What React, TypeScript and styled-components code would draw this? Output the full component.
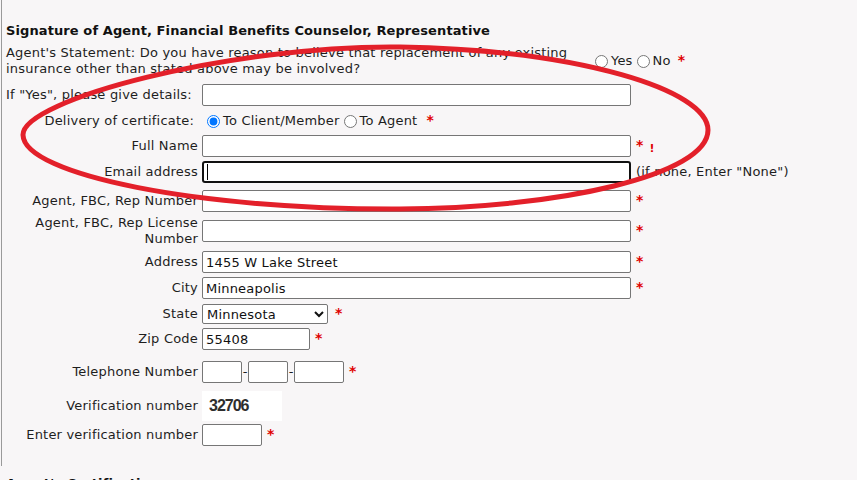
import React from "react";
import styled, { createGlobalStyle } from "styled-components";

const GlobalStyle = createGlobalStyle`
  html, body { margin: 0; padding: 0; background: #f8f6f7; }
  body {
    font-family: "DejaVu Sans", Verdana, sans-serif;
    font-size: 13px;
    letter-spacing: 0.2px;
    color: #1e1e1e;
  }
`;

const Page = styled.div`
  position: relative;
  width: 857px;
  height: 480px;
  overflow: hidden;
`;

const Section = styled.div`
  margin-left: 1px;
  border-left: 1px solid #9a9a9a;
  padding: 23px 0 20px 4px;
`;

const Heading = styled.h3`
  margin: 0;
  font-size: 13px;
  font-weight: bold;
  line-height: 16px;
  letter-spacing: 0.1px;
  color: #111;
`;

const NextHeading = styled(Heading)`
  margin-top: 10px;
  padding-left: 6px;
`;

const StatementRow = styled.div`
  display: flex;
  align-items: center;
  margin-top: 6px;
`;

const StatementText = styled.div`
  width: 584px;
  line-height: 16px;
  span { display: block; white-space: nowrap; }
`;

const Choices = styled.div`
  display: flex;
  align-items: center;
  line-height: 16px;
  white-space: nowrap;
`;

const Radio = styled.input.attrs({ type: "radio" })<{ $first?: boolean }>`
  width: 13px;
  height: 13px;
  margin: 0 3px 0 ${(p) => (p.$first ? 5 : 4)}px;
`;

const FormRow = styled.div<{ $mt: number }>`
  display: grid;
  grid-template-columns: 192px 1fr;
  column-gap: 4px;
  align-items: center;
  min-height: 20px;
  margin-top: ${(p) => p.$mt}px;
`;

const Label = styled.div<{ $align?: string; $pad?: number }>`
  text-align: ${(p) => p.$align || "right"};
  padding-right: ${(p) => p.$pad || 0}px;
  line-height: 16px;
`;

const Field = styled.div`
  display: flex;
  align-items: center;
  line-height: 16px;
`;

const TextInput = styled.input<{ $w: number; $focused?: boolean }>`
  box-sizing: border-box;
  width: ${(p) => p.$w}px;
  height: 22px;
  padding: 1px 3px;
  margin: 0;
  background: #fff;
  color: #111;
  font-family: inherit;
  font-size: 13px;
  letter-spacing: 0.2px;
  border: ${(p) => (p.$focused ? "2px solid #111" : "1px solid #767676")};
  border-radius: ${(p) => (p.$focused ? 3 : 2)}px;
  outline: none;
`;

const CaretWrap = styled.span`
  position: relative;
  display: inline-flex;
  &::after {
    content: "";
    position: absolute;
    left: 5px;
    top: 3px;
    width: 1px;
    height: 16px;
    background: #000;
  }
`;

const Select = styled.select`
  box-sizing: border-box;
  width: 126px;
  height: 20px;
  margin: 0;
  font-family: inherit;
  font-size: 13px;
  letter-spacing: 0.2px;
  color: #111;
  background: #fff;
  border: 1px solid #767676;
  border-radius: 2px;
`;

const Req = styled.span<{ $ml?: number }>`
  color: #e00000;
  font-weight: bold;
  font-size: 14px;
  margin-left: ${(p) => p.$ml ?? 5}px;
  position: relative;
  top: -1px;
`;

const Bang = styled.span`
  color: #e00000;
  font-weight: bold;
  font-size: 11px;
  margin-left: 6px;
  position: relative;
  top: 3px;
`;

const Note = styled.span`
  margin-left: 5px;
  white-space: nowrap;
`;

const Dash = styled.span`
  width: 6px;
  text-align: center;
  letter-spacing: 0;
`;

const VerifyBox = styled.div`
  box-sizing: border-box;
  width: 80px;
  height: 30px;
  padding-left: 7px;
  display: flex;
  align-items: center;
  background: #fff;
  font-family: "Liberation Sans", Arial, sans-serif;
  font-weight: bold;
  font-size: 16px;
  letter-spacing: -1px;
  color: #2e2e2e;
`;

const Annotation = styled.svg`
  position: absolute;
  left: 0;
  top: 0;
  pointer-events: none;
`;

export default function App() {
  return (
    <Page>
      <GlobalStyle />
      <Section>
        <Heading>Signature of Agent, Financial Benefits Counselor, Representative</Heading>
        <StatementRow>
          <StatementText>
            <span>Agent's Statement: Do you have reason to believe that replacement of any existing</span>
            <span>insurance other than stated above may be involved?</span>
          </StatementText>
          <Choices>
            <Radio name="repl" $first />Yes
            <Radio name="repl" />No
            <Req $ml={7}>*</Req>
          </Choices>
        </StatementRow>

        <FormRow $mt={7}>
          <Label $align="left">If "Yes", please give details:</Label>
          <Field><TextInput $w={429} /></Field>
        </FormRow>

        <FormRow $mt={5}>
          <Label $pad={4}>Delivery of certificate:</Label>
          <Field>
            <Radio name="deliv" $first defaultChecked />To Client/Member
            <Radio name="deliv" />To Agent
            <Req $ml={9}>*</Req>
          </Field>
        </FormRow>

        <FormRow $mt={4}>
          <Label>Full Name</Label>
          <Field><TextInput $w={429} /><Req>*</Req><Bang>!</Bang></Field>
        </FormRow>

        <FormRow $mt={4}>
          <Label>Email address</Label>
          <Field>
            <CaretWrap><TextInput $w={429} $focused /></CaretWrap>
            <Note>(if none, Enter "None")</Note>
          </Field>
        </FormRow>

        <FormRow $mt={7}>
          <Label>Agent, FBC, Rep Number</Label>
          <Field><TextInput $w={429} /><Req>*</Req></Field>
        </FormRow>

        <FormRow $mt={3}>
          <Label>Agent, FBC, Rep License Number</Label>
          <Field><TextInput $w={429} /><Req>*</Req></Field>
        </FormRow>

        <FormRow $mt={4}>
          <Label>Address</Label>
          <Field><TextInput $w={429} defaultValue="1455 W Lake Street" /><Req>*</Req></Field>
        </FormRow>

        <FormRow $mt={4}>
          <Label>City</Label>
          <Field><TextInput $w={429} defaultValue="Minneapolis" /><Req>*</Req></Field>
        </FormRow>

        <FormRow $mt={5}>
          <Label>State</Label>
          <Field>
            <Select defaultValue="MN">
              <option value="MN">Minnesota</option>
            </Select>
            <Req $ml={7}>*</Req>
          </Field>
        </FormRow>

        <FormRow $mt={4}>
          <Label>Zip Code</Label>
          <Field><TextInput $w={108} defaultValue="55408" /><Req>*</Req></Field>
        </FormRow>

        <FormRow $mt={11}>
          <Label>Telephone Number</Label>
          <Field>
            <TextInput $w={40} />
            <Dash>-</Dash>
            <TextInput $w={40} />
            <Dash>-</Dash>
            <TextInput $w={50} />
            <Req>*</Req>
          </Field>
        </FormRow>

        <FormRow $mt={8}>
          <Label>Verification number</Label>
          <Field><VerifyBox>32706</VerifyBox></Field>
        </FormRow>

        <FormRow $mt={3}>
          <Label>Enter verification number</Label>
          <Field><TextInput $w={60} /><Req>*</Req></Field>
        </FormRow>
      </Section>
      <NextHeading>Agent's Certification</NextHeading>

      <Annotation width={857} height={480} viewBox="0 0 857 480">
        <path
          d="M 708 130 C 708 90, 580 50, 400 47 C 230 45, 22 100, 23 135 C 24 175, 200 210, 400 209 C 560 208, 708 175, 708 130 Z"
          fill="none"
          stroke="#e3202a"
          strokeWidth={5}
        />
      </Annotation>
    </Page>
  );
}
